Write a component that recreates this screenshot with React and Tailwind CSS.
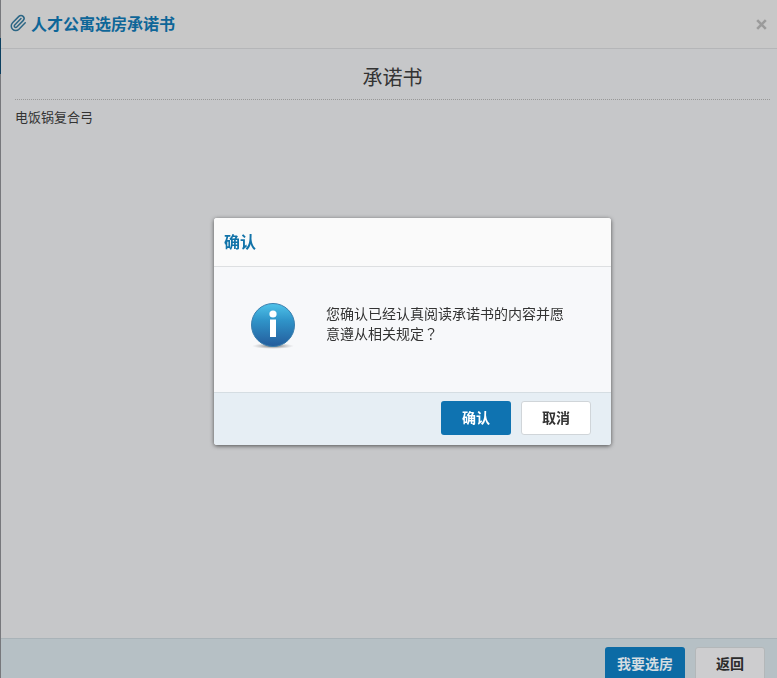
import { Paperclip } from "lucide-react";

const fontStack = "font-['Noto_Sans_CJK_SC',sans-serif]";

function InfoIcon() {
  return (
    <svg width="46" height="48" viewBox="0 0 46 48" className="shrink-0" aria-hidden="true">
      <defs>
        <linearGradient id="ball" x1="0" y1="0" x2="0" y2="1">
          <stop offset="0" stopColor="#4fc3ea" />
          <stop offset="0.4" stopColor="#2f93c8" />
          <stop offset="1" stopColor="#245c9c" />
        </linearGradient>
        <radialGradient id="ground">
          <stop offset="0" stopColor="#555" stopOpacity="0.9" />
          <stop offset="1" stopColor="#999" stopOpacity="0" />
        </radialGradient>
      </defs>
      <ellipse cx="23" cy="44" rx="21" ry="3" fill="url(#ground)" />
      <circle cx="23" cy="23" r="21.5" fill="url(#ball)" stroke="#3a7fae" strokeWidth="1" />
      <circle cx="23" cy="12" r="3.6" fill="#fff" />
      <rect x="20" y="17.5" width="6" height="17.5" fill="#fff" />
    </svg>
  );
}

export default function App() {
  return (
    <div className={`${fontStack} flex h-screen overflow-hidden bg-[#c6c7c9] text-[#333]`}>
      <div className="w-px shrink-0 bg-[#77787c] pt-[38px]">
        <div className="h-9 bg-[#0b3f60]" />
      </div>

      <div className="flex min-w-0 flex-1 flex-col">
        <header className="flex h-[49px] shrink-0 items-center justify-between border-b border-[#b5b6b8] bg-[#c8c8c8] pr-[10px] pl-2">
          <h1 className="flex items-center gap-1 pb-[2px] text-base font-bold text-[#0e6698]">
            <Paperclip size={18} strokeWidth={2} className="text-[#2c6685]" />
            人才公寓选房承诺书
          </h1>
          <button type="button" aria-label="关闭" className="text-[#9b9b9b]">
            <svg width="11" height="11" viewBox="0 0 11 11" stroke="currentColor" strokeWidth="2.6">
              <path d="M1.2 1.2 9.8 9.8M9.8 1.2 1.2 9.8" />
            </svg>
          </button>
        </header>

        <main className="flex-1 pr-[7px] pl-[14px]">
          <h2 className="border-b border-dotted border-[#989898] pt-[13px] pb-[7px] text-center text-xl leading-[30px]">
            承诺书
          </h2>
          <p className="pt-[7px] text-[13px] leading-5">电饭锅复合弓</p>
        </main>

        <footer className="flex h-10 shrink-0 items-start justify-end gap-[10px] overflow-hidden border-t border-[#a9b3b8] bg-[#b6c0c5] pt-2 pr-3 text-sm font-bold">
          <button type="button" className="h-[34px] w-20 shrink-0 rounded-[3px] bg-[#0c6ba5] pb-[2px] text-[#d3dce1]">
            我要选房
          </button>
          <button type="button" className="h-[34px] w-[70px] shrink-0 rounded-[3px] border border-[#b3b7b9] bg-[#cdcdcf] pb-[2px] text-[#2b2b2b]">
            返回
          </button>
        </footer>
      </div>

      <div className="fixed inset-0 flex items-center justify-center pb-4 pl-12">
        <div
          role="dialog"
          aria-labelledby="confirm-title"
          className="w-[397px] overflow-hidden rounded-[3px] bg-[#f7f8fa] shadow-[0_1px_4px_rgba(0,0,0,0.6)]"
        >
          <h3
            id="confirm-title"
            className="border-b border-[#dddfe1] bg-[#fafafa] px-[10px] pt-[11px] pb-[13px] text-base leading-6 font-bold text-[#1173a9]"
          >
            确认
          </h3>
          <div className="flex h-[125px] items-start gap-[30px] pt-[35px] pl-9">
            <InfoIcon />
            <p className="w-60 pt-px text-sm leading-5">
              您确认已经认真阅读承诺书的内容并愿意遵从相关规定
              <span className="font-['Noto_Sans_CJK_TC',sans-serif]">？</span>
            </p>
          </div>
          <div className="flex justify-end gap-[10px] border-t border-[#d5dde2] bg-[#e6eef4] pt-2 pr-5 pb-[10px] text-sm font-bold">
            <button type="button" className="h-[34px] w-[70px] rounded-[3px] bg-[#0f73b1] pb-[2px] text-white">
              确认
            </button>
            <button type="button" className="h-[34px] w-[70px] rounded-[3px] border border-[#d0d5d9] bg-white pb-[2px]">
              取消
            </button>
          </div>
        </div>
      </div>
    </div>
  );
}
